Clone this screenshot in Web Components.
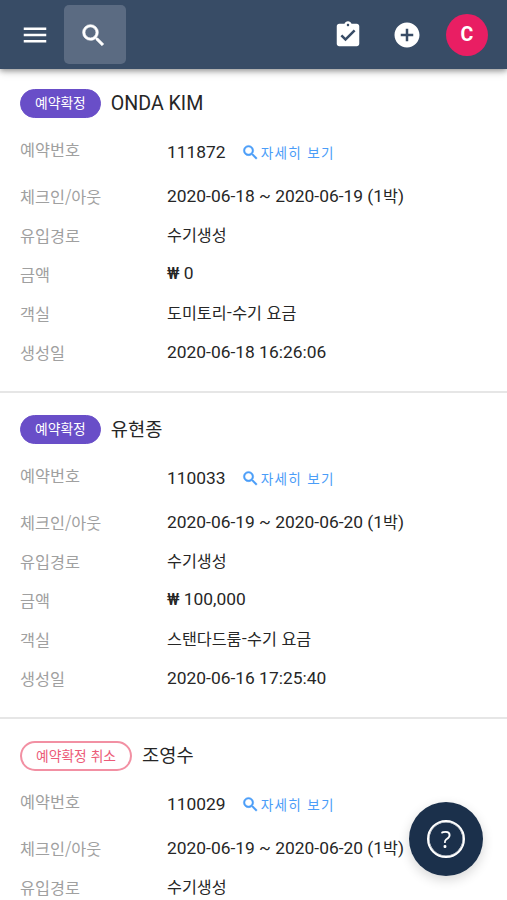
<!DOCTYPE html>
<html lang="ko">
  <head>
    <meta charset="utf-8" />
    <meta name="viewport" content="width=device-width, initial-scale=1.0" />
    <title>예약 목록</title>
    <style>
      body {
        margin: 0;
        height: 900px;
        overflow: hidden;
        background: #fff;
        color: #262626;
        font-family: Roboto, "Noto Sans CJK KR", sans-serif;
      }
    </style>
  </head>
  <body>
    <app-bar initial="C"></app-bar>
    <booking-list>
      <booking-card status="예약확정" name="ONDA KIM" number="111872">
        <booking-row label="체크인/아웃">2020-06-18 ~ 2020-06-19 (1<ko-text>박</ko-text>)</booking-row>
        <booking-row label="유입경로"><ko-text>수기생성</ko-text></booking-row>
        <booking-row label="금액"><won-sign></won-sign> 0</booking-row>
        <booking-row label="객실"><ko-text>도미토리-수기 요금</ko-text></booking-row>
        <booking-row label="생성일">2020-06-18 16:26:06</booking-row>
      </booking-card>
      <booking-card status="예약확정" name="유현종" number="110033">
        <booking-row label="체크인/아웃">2020-06-19 ~ 2020-06-20 (1<ko-text>박</ko-text>)</booking-row>
        <booking-row label="유입경로"><ko-text>수기생성</ko-text></booking-row>
        <booking-row label="금액"><won-sign></won-sign> 100,000</booking-row>
        <booking-row label="객실"><ko-text>스탠다드룸-수기 요금</ko-text></booking-row>
        <booking-row label="생성일">2020-06-16 17:25:40</booking-row>
      </booking-card>
      <booking-card status="예약확정 취소" name="조영수" number="110029" cancelled>
        <booking-row label="체크인/아웃">2020-06-19 ~ 2020-06-20 (1<ko-text>박</ko-text>)</booking-row>
        <booking-row label="유입경로"><ko-text>수기생성</ko-text></booking-row>
      </booking-card>
    </booking-list>
    <help-button></help-button>

    <script>
      const icons = {
        menu: "M3 18h18v-2H3v2zm0-5h18v-2H3v2zm0-7v2h18V6H3z",
        search:
          "M15.5 14h-.79l-.28-.27A6.47 6.47 0 0 0 16 9.5 6.5 6.5 0 1 0 9.5 16c1.61 0 3.09-.59 4.23-1.57l.27.28v.79l5 4.99L20.49 19l-4.99-5zm-6 0C7.01 14 5 11.99 5 9.5S7.01 5 9.5 5 14 7.01 14 9.5 11.99 14 9.5 14z",
        task:
          "M19 3h-4.18C14.4 1.84 13.3 1 12 1s-2.4.84-2.82 2H5c-1.1 0-2 .9-2 2v14c0 1.1.9 2 2 2h14c1.1 0 2-.9 2-2V5c0-1.1-.9-2-2-2zm-7 0c.55 0 1 .45 1 1s-.45 1-1 1-1-.45-1-1 .45-1 1-1zm-2 14-4-4 1.41-1.41L10 14.17l6.59-6.59L18 9l-8 8z",
        add: "M12 2C6.48 2 2 6.48 2 12s4.48 10 10 10 10-4.48 10-10S17.52 2 12 2zm5 11h-4v4h-2v-4H7v-2h4V7h2v4h4v2z",
      };

      // attach an open shadow root holding the given markup
      function render(el, html) {
        const template = document.createElement("template");
        template.innerHTML = html;
        el.attachShadow({ mode: "open" });
        el.shadowRoot.appendChild(template.content.cloneNode(true));
      }

      class MdIcon extends HTMLElement {
        constructor() {
          super();
          render(this, `
            <style>
              :host { display: block; width: var(--size, 30px); height: var(--size, 30px); flex: none; }
              svg { display: block; width: 100%; height: 100%; fill: currentColor; stroke: currentColor; stroke-width: var(--stroke, 0); }
            </style>
            <svg viewBox="0 0 24 24"><path /></svg>
          `);
        }
        connectedCallback() {
          this.shadowRoot.querySelector("path").setAttribute("d", icons[this.getAttribute("name")]);
        }
      }

      // hangul is set a little smaller than the latin digits around it
      class KoText extends HTMLElement {
        constructor() {
          super();
          render(this, `<style>:host { font-family: "Noto Sans CJK KR", sans-serif; font-size: 16.2px; line-height: 1; }</style><slot></slot>`);
        }
      }

      class WonSign extends HTMLElement {
        constructor() {
          super();
          render(this, `<style>:host { font-family: Roboto, sans-serif; font-size: 16px; font-weight: 500; }</style><span>₩</span>`);
        }
      }

      class AppBar extends HTMLElement {
        constructor() {
          super();
          render(this, `
            <style>
              :host {
                display: flex;
                align-items: center;
                box-sizing: border-box;
                position: relative;
                z-index: 1;
                height: 69px;
                padding: 0 19px 0 20px;
                background: #384c66;
                color: #fff;
                box-shadow: 0 2px 5px rgba(0, 0, 0, 0.32), 0 3px 9px rgba(0, 0, 0, 0.14);
              }
              .search {
                display: flex;
                align-items: center;
                justify-content: center;
                box-sizing: border-box;
                width: 62px;
                height: 59px;
                margin-left: 14px;
                padding: 1px 3px 0 0;
                border-radius: 5px;
                background: #5b6b82;
                --size: 29px;
                --stroke: 0.5;
              }
              .actions { display: flex; align-items: center; gap: 29px; margin-left: auto; }
              .avatar {
                display: flex;
                align-items: center;
                justify-content: center;
                width: 42px;
                height: 42px;
                margin-left: -5px;
                border-radius: 50%;
                background: #e91e63;
                font-size: 19.5px;
                font-weight: 700;
              }
            </style>
            <md-icon name="menu"></md-icon>
            <div class="search"><md-icon name="search"></md-icon></div>
            <div class="actions">
              <md-icon name="task"></md-icon>
              <md-icon name="add"></md-icon>
              <div class="avatar"></div>
            </div>
          `);
          this.shadowRoot.querySelector(".avatar").textContent = this.getAttribute("initial");
        }
      }

      class BookingList extends HTMLElement {
        constructor() {
          super();
          render(this, `
            <style>
              :host { display: block; margin-top: -2px; }
            </style>
            <slot></slot>
          `);
        }
      }

      class BookingRow extends HTMLElement {
        constructor() {
          super();
          render(this, `
            <style>
              :host { display: flex; align-items: center; height: 39.1px; }
              .label {
                width: 147px;
                flex: none;
                color: #a0a0a0;
                font-family: "Noto Sans CJK KR", sans-serif;
                font-size: 16.3px;
                line-height: 24px;
              }
              .value { font-size: 17.4px; line-height: 24px; white-space: nowrap; }
            </style>
            <div class="label"></div>
            <div class="value"><slot></slot></div>
          `);
          this.shadowRoot.querySelector(".label").textContent = this.getAttribute("label");
        }
      }

      class BookingCard extends HTMLElement {
        constructor() {
          super();
          render(this, `
            <style>
              :host {
                display: block;
                box-sizing: border-box;
                height: 326px;
                padding: 22px 20px 0;
                border-bottom: 2px solid #e6e6e6;
              }
              :host([cancelled]) { height: auto; border: 0; }
              .head { display: flex; align-items: center; gap: 10px; height: 29px; }
              .badge {
                box-sizing: border-box;
                height: 29px;
                padding: 0 14px;
                border: 1px solid #694ec8;
                border-radius: 15px;
                background: #694ec8;
                color: #fff;
                font-family: "Noto Sans CJK KR", sans-serif;
                font-size: 13.8px;
                line-height: 25px;
              }
              :host([cancelled]) .badge {
                height: 30px;
                border: 2px solid #f290a3;
                background: #fff;
                color: #ec5b78;
              }
              .name { font-size: 19.6px; line-height: 28px; }
              .name:lang(ko) { font-size: 18.7px; }
              .number { display: flex; height: 58px; padding-top: 10px; box-sizing: border-box; }
              .number .label {
                width: 147px;
                color: #a0a0a0;
                font-family: "Noto Sans CJK KR", sans-serif;
                font-size: 16.3px;
                line-height: 42px;
              }
              .number .value { font-size: 17.4px; line-height: 48px; }
              .detail {
                display: flex;
                align-items: center;
                gap: 1px;
                height: 48px;
                margin-left: 15px;
                color: #4a9df8;
                font-family: "Noto Sans CJK KR", sans-serif;
                font-size: 13.6px;
                letter-spacing: 1.3px;
                --size: 19px;
                --stroke: 0.6;
              }
              .detail span { padding-bottom: 1px; line-height: 18px; }
            </style>
            <div class="head">
              <div class="badge"></div>
              <div class="name"></div>
            </div>
            <div class="number">
              <div class="label">예약번호</div>
              <div class="value"></div>
              <div class="detail"><md-icon name="search"></md-icon><span>자세히 보기</span></div>
            </div>
            <slot></slot>
          `);
          const name = this.shadowRoot.querySelector(".name");
          name.textContent = this.getAttribute("name");
          name.lang = /[가-힣]/.test(name.textContent) ? "ko" : "en";
          this.shadowRoot.querySelector(".badge").textContent = this.getAttribute("status");
          this.shadowRoot.querySelector(".value").textContent = this.getAttribute("number");
        }
      }

      class HelpButton extends HTMLElement {
        constructor() {
          super();
          render(this, `
            <style>
              :host {
                position: fixed;
                right: 24px;
                bottom: 24px;
                z-index: 2;
                display: flex;
                align-items: center;
                justify-content: center;
                width: 74px;
                height: 74px;
                border-radius: 50%;
                background: #1b304b;
                box-shadow: 0 4px 12px rgba(0, 0, 0, 0.16);
              }
              .ring {
                display: flex;
                align-items: center;
                justify-content: center;
                box-sizing: border-box;
                width: 38px;
                height: 38px;
                border: 2px solid #fff;
                border-radius: 50%;
                box-shadow: inset 0 0 0 0.5px #fff;
                color: #fff;
                font-family: "Open Sans", sans-serif;
                font-size: 24px;
                line-height: 1;
              }
            </style>
            <div class="ring">?</div>
          `);
        }
      }

      window.customElements.define("md-icon", MdIcon);
      window.customElements.define("ko-text", KoText);
      window.customElements.define("won-sign", WonSign);
      window.customElements.define("app-bar", AppBar);
      window.customElements.define("booking-list", BookingList);
      window.customElements.define("booking-row", BookingRow);
      window.customElements.define("booking-card", BookingCard);
      window.customElements.define("help-button", HelpButton);
    </script>
  </body>
</html>
